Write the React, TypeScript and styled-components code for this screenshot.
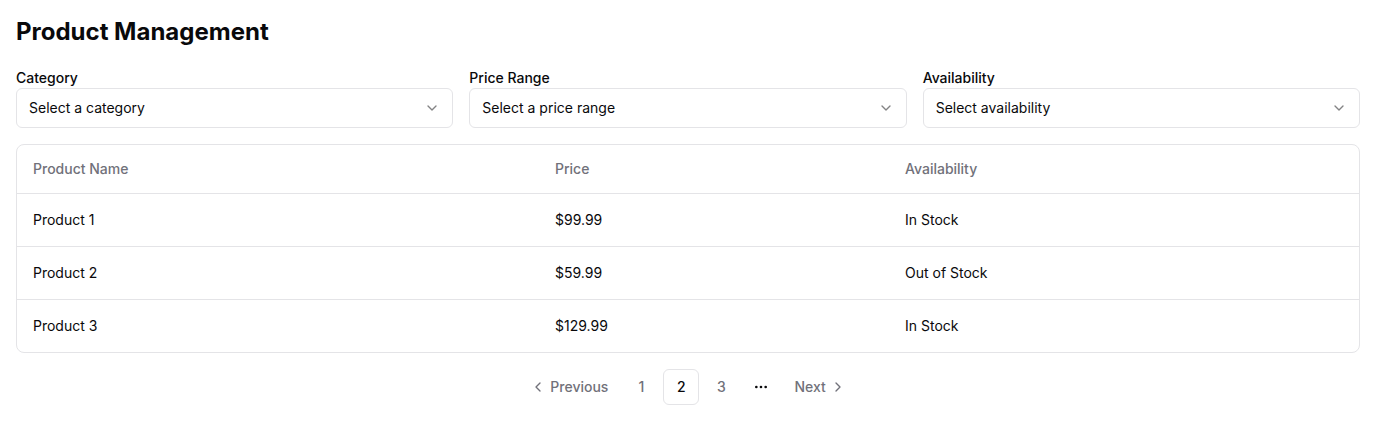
import React from 'react'
import styled, { createGlobalStyle } from 'styled-components'
import { ChevronDown, ChevronLeft, ChevronRight, MoreHorizontal } from 'lucide-react'

const GlobalStyle = createGlobalStyle`
    * { box-sizing: border-box; }
    body {
        margin: 0;
        background: #ffffff;
        font-family: Inter, "Noto Sans", sans-serif;
        color: #09090b;
    }
`

const Page = styled.div`
    padding: 16px;
`

const Title = styled.h1`
    margin: 0 0 20px;
    font-size: 24px;
    line-height: 32px;
    font-weight: 700;
`

const Filters = styled.div`
    display: grid;
    grid-template-columns: repeat(3, 1fr);
    gap: 16px;
`

const Field = styled.div`
    display: flex;
    flex-direction: column;
`

const Label = styled.label`
    font-size: 14px;
    line-height: 20px;
    font-weight: 500;
`

const SelectBox = styled.button`
    display: flex;
    align-items: center;
    justify-content: space-between;
    height: 40px;
    padding: 0 12px 1px;
    border: 1px solid #e4e4e7;
    border-radius: 6px;
    background: #fff;
    font-family: inherit;
    font-size: 14px;
    color: #09090b;
    text-align: left;
    svg { opacity: 0.5; }
`

const Card = styled.div`
    margin-top: 16px;
    border: 1px solid #e4e4e7;
    border-radius: 8px;
    overflow: hidden;
`

const Row = styled.div<{ $head?: boolean }>`
    display: grid;
    grid-template-columns: 522px 350px 1fr;
    align-items: center;
    height: ${p => (p.$head ? '48px' : '53px')};
    padding-bottom: 2px;
    border-top: ${p => (p.$head ? 'none' : '1px solid #e4e4e7')};
    font-size: 14px;
    font-weight: ${p => (p.$head ? 500 : 400)};
    color: ${p => (p.$head ? '#71717a' : '#09090b')};
`

const Cell = styled.div`
    padding: 0 16px;
`

const Pager = styled.nav`
    display: flex;
    justify-content: center;
    gap: 4px;
    margin-top: 16px;
`

const PageButton = styled.button<{ $active?: boolean; $wide?: boolean }>`
    display: flex;
    align-items: center;
    justify-content: center;
    gap: 4px;
    height: 36px;
    min-width: 36px;
    padding: ${p => (p.$wide ? '0 10px 1px' : '0 0 1px')};
    border: 1px solid ${p => (p.$active ? '#e4e4e7' : 'transparent')};
    border-radius: 6px;
    background: #fff;
    font-family: inherit;
    font-size: 14px;
    font-weight: 500;
    color: ${p => (p.$active ? '#09090b' : '#71717a')};
`

const Ellipsis = styled.span`
    display: flex;
    align-items: center;
    justify-content: center;
    width: 36px;
    height: 36px;
`

const filters = [
    { label: 'Category', placeholder: 'Select a category' },
    { label: 'Price Range', placeholder: 'Select a price range' },
    { label: 'Availability', placeholder: 'Select availability' },
]

const products = [
    { name: 'Product 1', price: '$99.99', stock: 'In Stock' },
    { name: 'Product 2', price: '$59.99', stock: 'Out of Stock' },
    { name: 'Product 3', price: '$129.99', stock: 'In Stock' },
]

const App: React.FC = () => {
    return (
        <Page>
            <GlobalStyle />
            <Title>Product Management</Title>
            <Filters>
                {filters.map(f => (
                    <Field key={f.label}>
                        <Label>{f.label}</Label>
                        <SelectBox>
                            {f.placeholder}
                            <ChevronDown size={16} />
                        </SelectBox>
                    </Field>
                ))}
            </Filters>
            <Card>
                <Row $head>
                    <Cell>Product Name</Cell>
                    <Cell>Price</Cell>
                    <Cell>Availability</Cell>
                </Row>
                {products.map(p => (
                    <Row key={p.name}>
                        <Cell>{p.name}</Cell>
                        <Cell>{p.price}</Cell>
                        <Cell>{p.stock}</Cell>
                    </Row>
                ))}
            </Card>
            <Pager>
                <PageButton $wide>
                    <ChevronLeft size={16} />
                    Previous
                </PageButton>
                <PageButton>1</PageButton>
                <PageButton $active>2</PageButton>
                <PageButton>3</PageButton>
                <Ellipsis>
                    <MoreHorizontal size={16} />
                </Ellipsis>
                <PageButton $wide>
                    Next
                    <ChevronRight size={16} />
                </PageButton>
            </Pager>
        </Page>
    )
}

export default App
